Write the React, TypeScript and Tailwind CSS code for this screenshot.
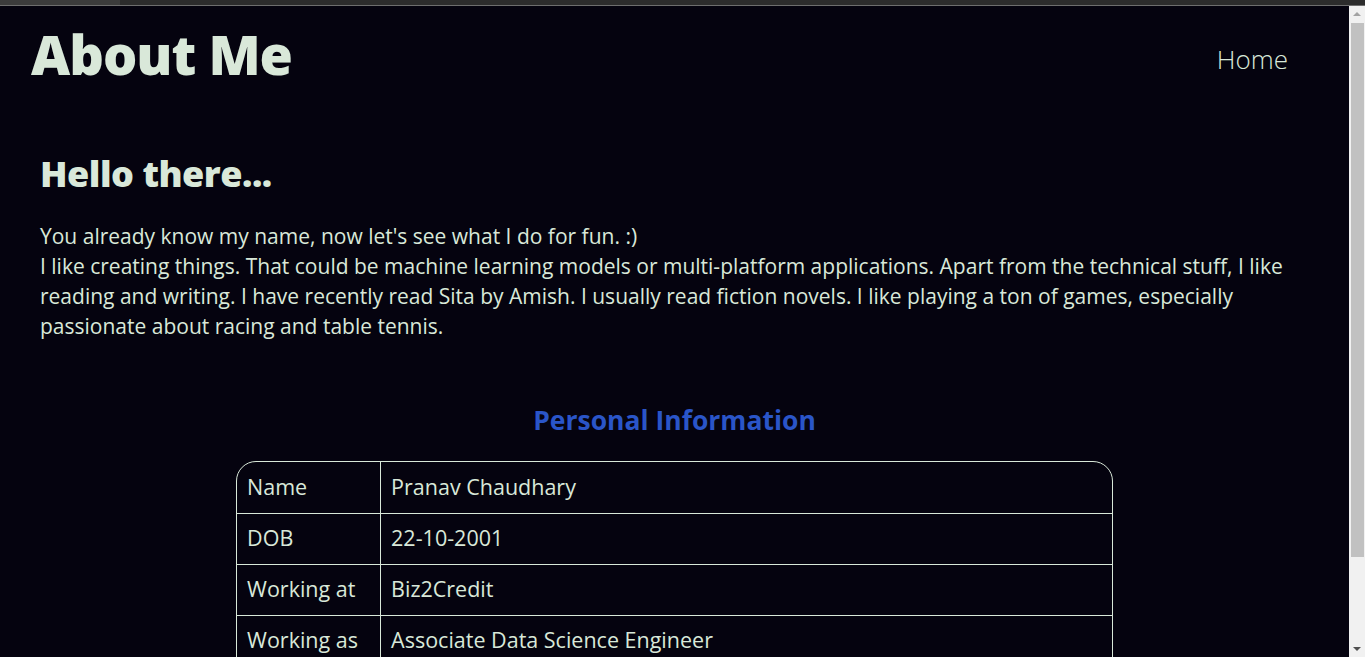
import React from "react";

const rows: [string, string][] = [
  ["Name", "Pranav Chaudhary"],
  ["DOB", "22-10-2001"],
  ["Working at", "Biz2Credit"],
  ["Working as", "Associate Data Science Engineer"],
  ["Location", "Noida, India"],
];

export default function App() {
  return (
    <div
      className="h-[657px] w-full overflow-hidden flex flex-col bg-[#05030f]"
      style={{ fontFamily: '"Open Sans", "Noto Sans", sans-serif' }}
    >
      <div className="h-[6px] shrink-0 flex">
        <div className="w-[120px] bg-[#3c3c3c] border-b border-[#6e6e6e]" />
        <div className="flex-1 bg-[#2c2c2c] border-b border-[#6e6e6e]" />
      </div>
      <div className="flex-1 flex min-h-0">
        <main className="flex-1 min-w-0 text-[#d9e8d9]">
          <header className="flex items-center justify-between pl-[31px] pr-[61px] h-[102px]">
            <h1 className="text-[54px] font-extrabold tracking-[-1px] leading-none -mt-[6px]">About Me</h1>
            <a className="text-[26px] font-light mt-[5px]">Home</a>
          </header>
          <section className="px-[40px] pt-[48px]">
            <h2 className="text-[36px] font-extrabold leading-none tracking-[-0.5px]">Hello there...</h2>
            <p className="mt-[29px] text-[21px] leading-[30px]">
              You already know my name, now let's see what I do for fun. :)
              <br />
              I like creating things. That could be machine learning models or multi-platform applications. Apart from the
              technical stuff, I like reading and writing. I have recently read Sita by Amish. I usually read fiction
              novels. I like playing a ton of games, especially passionate about racing and table tennis.
            </p>
          </section>
          <section className="mt-[66px] flex flex-col items-center">
            <h3 className="text-[26.5px] font-bold leading-none text-[#2a55c8]">Personal Information</h3>
            <div className="mt-[27px] w-[65%] border border-[#d9e8d9] rounded-t-[20px] overflow-hidden">
              {rows.map(([k, v], i) => (
                <div key={k} className={`flex h-[51px] ${i > 0 ? "border-t border-[#d9e8d9]" : ""}`}>
                  <div className="w-[144px] shrink-0 border-r border-[#d9e8d9] px-[10px] flex items-center text-[21.5px]">
                    {k}
                  </div>
                  <div className="flex-1 px-[10px] flex items-center text-[21.5px]">{v}</div>
                </div>
              ))}
            </div>
          </section>
        </main>
        <div className="w-[16px] shrink-0 bg-[#f1f1f1] flex flex-col items-center">
          <div className="h-[16px] w-full flex items-center justify-center">
            <div className="w-0 h-0 border-l-[4px] border-r-[4px] border-b-[4px] border-l-transparent border-r-transparent border-b-[#a3a3a3]" />
          </div>
          <div className="w-[13px] h-[534px] bg-[#c1c1c1] mt-[1px]" />
          <div className="flex-1" />
          <div className="h-[16px] w-full flex items-center justify-center">
            <div className="w-0 h-0 border-l-[4px] border-r-[4px] border-t-[4px] border-l-transparent border-r-transparent border-t-[#505050]" />
          </div>
        </div>
      </div>
    </div>
  );
}
